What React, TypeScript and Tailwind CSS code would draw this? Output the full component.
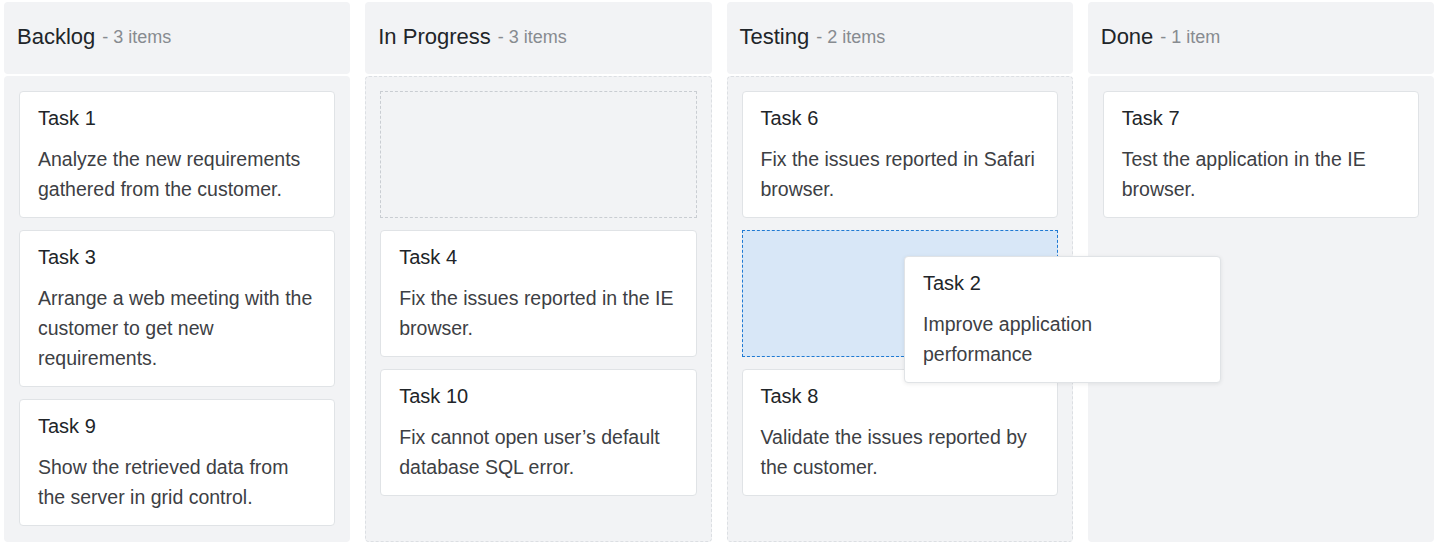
type Card = { id: string; title: string; text: string };
type Slot = Card | { placeholder: "empty" | "active" };

const columns: { name: string; count: string; dashed: boolean; items: Slot[] }[] = [
  {
    name: "Backlog",
    count: "3 items",
    dashed: false,
    items: [
      { id: "1", title: "Task 1", text: "Analyze the new requirements gathered from the customer." },
      { id: "3", title: "Task 3", text: "Arrange a web meeting with the customer to get new requirements." },
      { id: "9", title: "Task 9", text: "Show the retrieved data from the server in grid control." },
    ],
  },
  {
    name: "In Progress",
    count: "3 items",
    dashed: true,
    items: [
      { placeholder: "empty" },
      { id: "4", title: "Task 4", text: "Fix the issues reported in the IE browser." },
      { id: "10", title: "Task 10", text: "Fix cannot open user\u2019s default database SQL error." },
    ],
  },
  {
    name: "Testing",
    count: "2 items",
    dashed: true,
    items: [
      { id: "6", title: "Task 6", text: "Fix the issues reported in Safari browser." },
      { placeholder: "active" },
      { id: "8", title: "Task 8", text: "Validate the issues reported by the customer." },
    ],
  },
  {
    name: "Done",
    count: "1 item",
    dashed: false,
    items: [{ id: "7", title: "Task 7", text: "Test the application in the IE browser." }],
  },
];

function TaskCard({ card, className = "" }: { card: Card; className?: string }) {
  return (
    <div className={`rounded-[4px] border border-[#e0e3e6] bg-white px-[18px] pt-3 pb-[13px] ${className}`}>
      <div className="text-[20px] leading-[28px] text-[#212529]">{card.title}</div>
      <div className="mt-3 text-[19.5px] leading-[30px] text-[#3d4044]">{card.text}</div>
    </div>
  );
}

export default function App() {
  return (
    <div
      className="relative h-[548px] w-[1439px] bg-white pt-[2px] pl-1"
      style={{ fontFamily: '"Liberation Sans", Arial, sans-serif' }}
    >
      <div className="grid h-[540px] w-[1430px] grid-cols-4 gap-[15px]">
        {columns.map((col) => (
          <div key={col.name} className="flex flex-col">
            <div className="flex h-[72px] items-center rounded-[4px] bg-[#f2f3f5] px-[13px] pb-1">
              <span className="text-[22px] text-[#212529]">{col.name}</span>
              <span className="ml-[7px] pt-[3px] text-[18px] text-[#878b90]">- {col.count}</span>
            </div>
            <div
              className={`mt-[2px] flex flex-1 flex-col gap-[12px] rounded-[4px] border border-dashed bg-[#f2f3f5] px-[14px] pt-[14px] ${
                col.dashed ? "border-[#dcdfe3]" : "border-transparent"
              }`}
            >
              {col.items.map((item, i) =>
                "placeholder" in item ? (
                  item.placeholder === "empty" ? (
                    <div key={i} className="h-[127px] border border-dashed border-[#c9cdd2] bg-[#f2f3f5]" />
                  ) : (
                    <div key={i} className="h-[127px] border border-dashed border-[#1f7ad3] bg-[#d8e7f7]" />
                  )
                ) : (
                  <TaskCard key={item.id} card={item} />
                )
              )}
            </div>
          </div>
        ))}
      </div>

      <TaskCard
        card={{ id: "2", title: "Task 2", text: "Improve application performance" }}
        className="absolute top-[256px] left-[904px] w-[317px] shadow-[0_1px_4px_rgba(0,0,0,0.08)]"
      />
    </div>
  );
}
